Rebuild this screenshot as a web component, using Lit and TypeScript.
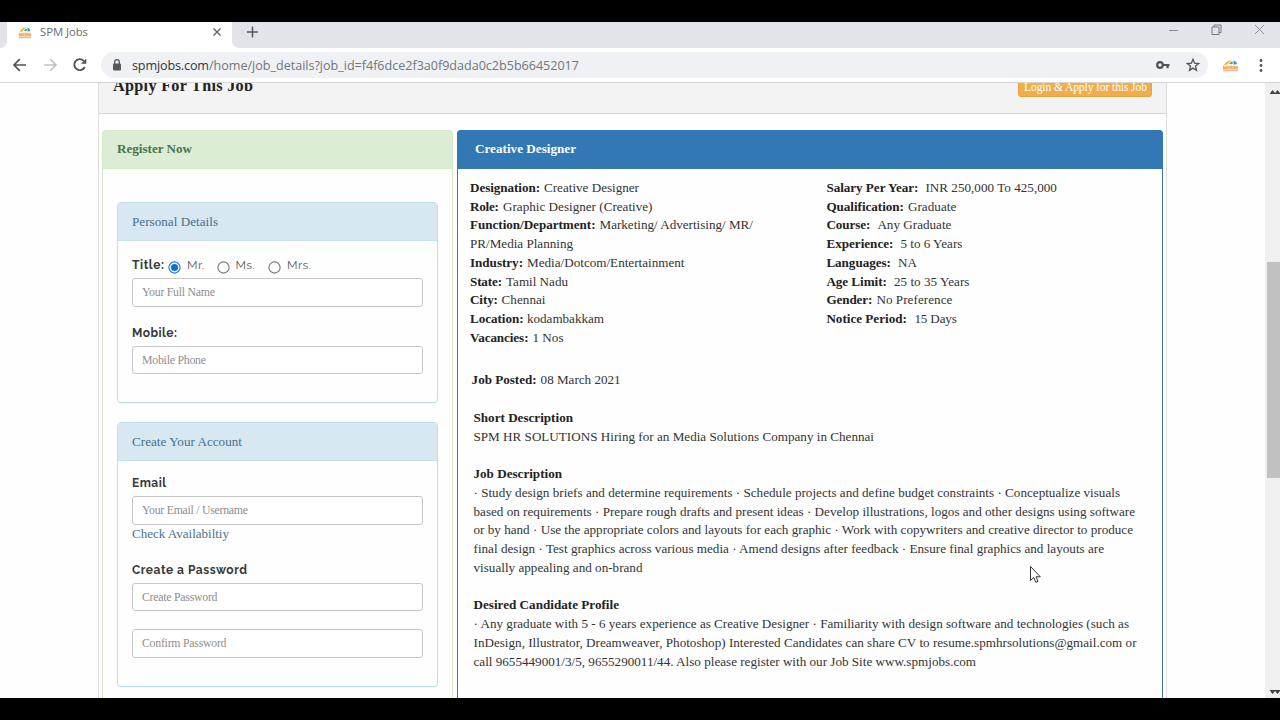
import { LitElement, html, css, svg, nothing } from "lit";
import { customElement, property } from "lit/decorators.js";

/** One line of text whose tracking is spread so that it fills a given width. */
@customElement("fit-text")
class FitText extends LitElement {
  @property({ type: Number }) w = 0;
  @property() text = "";
  static styles = css`
    :host { display: inline-block; white-space: pre; flex: none; }
  `;
  render() {
    return html`<span>${this.text}</span>`;
  }
  updated() {
    const span = this.renderRoot.querySelector("span") as HTMLElement;
    span.style.letterSpacing = "0px";
    const natural = span.getBoundingClientRect().width;
    const spacing = (this.w - natural) / Math.max(1, this.text.length - 1);
    span.style.letterSpacing = spacing.toFixed(4) + "px";
    this.style.width = this.w + "px";
  }
}

const fit = (text: string, w: number) => html`<fit-text .text=${text} .w=${w}></fit-text>`;

type Row = [string, number, number, string, number];

const LEFT: Row[] = [
  ["Designation:", 70, 4, "Creative Designer", 95],
  ["Role:", 29, 4, "Graphic Designer (Creative)", 149.5],
  ["Function/Department:", 125.5, 4, "Marketing/ Advertising/ MR/", 153.5],
  ["", 0, 0, "PR/Media Planning", 103],
  ["Industry:", 53, 4, "Media/Dotcom/Entertainment", 157.5],
  ["State:", 32, 4, "Tamil Nadu", 62],
  ["City:", 28, 3.5, "Chennai", 44],
  ["Location:", 53.5, 3.5, "kodambakkam", 77],
  ["Vacancies:", 58.5, 4, "1 Nos", 31],
];

const RIGHT: Row[] = [
  ["Salary Per Year:", 92, 7, "INR 250,000 To 425,000", 131.5],
  ["Qualification:", 77.5, 4, "Graduate", 48.5],
  ["Course:", 44, 7, "Any Graduate", 74],
  ["Experience:", 67, 7, "5 to 6 Years", 62],
  ["Languages:", 64.5, 7, "NA", 19],
  ["Age Limit:", 60.5, 7, "25 to 35 Years", 75.5],
  ["Gender:", 46, 4, "No Preference", 76],
  ["Notice Period:", 80.5, 7.5, "15 Days", 42.5],
];

const SECTIONS: { title: [string, number]; lines: [string, number][] }[] = [
  {
    title: ["Short Description", 99.5],
    lines: [["SPM HR SOLUTIONS Hiring for an Media Solutions Company in Chennai", 400.5]],
  },
  {
    title: ["Job Description", 88.5],
    lines: [
      ["· Study design briefs and determine requirements · Schedule projects and define budget constraints · Conceptualize visuals", 646.5],
      ["based on requirements · Prepare rough drafts and present ideas · Develop illustrations, logos and other designs using software", 661.5],
      ["or by hand · Use the appropriate colors and layouts for each graphic · Work with copywriters and creative director to produce", 659.5],
      ["final design · Test graphics across various media · Amend designs after feedback · Ensure final graphics and layouts are", 630.5],
      ["visually appealing and on-brand", 169],
    ],
  },
  {
    title: ["Desired Candidate Profile", 145.5],
    lines: [
      ["· Any graduate with 5 - 6 years experience as Creative Designer · Familiarity with design software and technologies (such as", 655.5],
      ["InDesign, Illustrator, Dreamweaver, Photoshop) Interested Candidates can share CV to resume.spmhrsolutions@gmail.com or", 663],
      ["call 9655449001/3/5, 9655290011/44. Also please register with our Job Site www.spmjobs.com", 502.5],
    ],
  },
];

const logo = (w: number) => html`<svg class="logo" width=${w} height="13" viewBox="0 0 17 13" preserveAspectRatio="none">
  <path d="M2 6C4 2.2 7 .8 10 1.6 8 2.4 6.6 3.8 5.6 5.4Z" fill="#f2b53c" />
  <path d="M7 4.6C9 6 10.500 5.400 11.600 3.600L9.400 2.400Z" fill="#4fae8e" />
  <path d="M11 1.600C13.400 2 14.800 3.400 15 5.200L11.400 5.400C12 4 12 3 11 1.600Z" fill="#2d9cc8" />
  <rect x="1" y="6.800" width="15" height="3.600" fill="#f3a95b" />
  <path d="M2 7.600H4.400M6 7.600V9.800M8 7.400V9.800M11 9.600V7.400M13 7.800H15.400" stroke="#fff3df" stroke-width=".7" />
  <rect x="1" y="11.200" width="15" height="1" fill="#e9a48a" />
</svg>`;

@customElement("app-root")
class AppRoot extends LitElement {
  static styles = css`
    :host { display: flex; flex-direction: column; box-sizing: border-box; width: 1280px; height: 720px; padding: 22px 0; background: #000; overflow: hidden; position: relative; font-family: "Liberation Serif", "Times New Roman", serif; color: #333; }
    * { box-sizing: border-box; }
    svg { display: block; flex: none; }
    .strip { height: 26px; flex: none; display: flex; background: #e2e4e9; font-family: "Open Sans", sans-serif; }
    .prev { width: 7px; background: #fff; }
    .prev i { display: block; height: 26px; background: #e2e4e9; border-bottom-right-radius: 7px; }
    .tab { width: 225px; background: #fff; display: flex; align-items: center; padding: 0 10px 6px 11px; color: #6a6d71; font-size: 11.4px; }
    .tab .name { margin: -2px 0 0 8px; flex: 1; }
    .rest { flex: 1; background: #fff; display: flex; }
    .rest .fill { flex: 1; background: #e2e4e9; border-bottom-left-radius: 7px; display: flex; padding: 4px 15px 0 14px; }
    .wins { margin-left: auto; margin-top: -2px; display: flex; gap: 32px; }
    .bar { height: 35px; flex: none; background: #fff; border-bottom: 1px solid #d4d5d7; display: flex; align-items: center; padding: 0 10px 0 10px; font-family: "Open Sans", sans-serif; }
    .nav { display: flex; gap: 10px; width: 91px; }
    .omni { width: 1107px; height: 26px; border-radius: 13px; background: #eff1f5; display: flex; align-items: center; padding: 0 7px 0 8px; font-size: 12.6px; line-height: 26px; color: #73767b; }
    .omni fit-text { margin-top: 1px; }
    .omni .host { color: #323437; margin-left: 7px; }
    .omni .key { margin-left: auto; margin-right: 14px; }
    .ext { margin-left: 14px; margin-right: 14px; }
    .view { flex: 1; min-height: 0; overflow: hidden; background: #fefefe; display: flex; }
    .page { width: 1265px; padding-left: 98px; }
    .outer { width: 1069px; height: 700px; border: solid #dedede; border-width: 0 1px; background: #fefefe; }
    .head { height: 31px; background: #f3f3f3; border-bottom: 1px solid #d8d8d8; display: flex; justify-content: space-between; padding: 0 14px; }
    .head h1 { margin: -8px 0 0; font-size: 16.2px; line-height: 22px; font-weight: bold; color: #222; }
    .btn { height: 22px; margin-top: -8px; width: 134px; background: #f0ad4e; border: 1px solid #eea236; border-radius: 3px; color: #fff; font-size: 11.6px; line-height: 23px; padding-left: 5px; overflow: hidden; }
    .cols { display: flex; gap: 4px; padding: 16px 0 0 3px; }
    .reg { width: 351px; height: 700px; border: 1px solid #d9e6cd; border-radius: 4px; }
    .reg > .title { height: 39px; margin: -1px -1px 0; background: #dcedd5; border-radius: 4px 4px 0 0; border: 1px solid #d6e9c6; color: #477548; font-weight: bold; font-size: 13.1px; line-height: 36px; padding-left: 14px; }
    .box { margin: 33px 0 0 14px; width: 321px; height: 201px; border: 1px solid #bfdfe8; border-radius: 4px; box-shadow: 0 1px 1px rgba(0, 0, 0, 0.05); padding: 0 14px; font-size: 13.1px; }
    .box.acct { margin-top: 19px; height: 265px; }
    .box .bt { margin: 0 -14px; padding-left: 14px; height: 38px; line-height: 37px; background: #d7e8f3; color: #476f88; border-bottom: 1px solid #c5e1ec; border-radius: 3px 3px 0 0; }
    .lab { font-family: "Raleway", "Lato", sans-serif; font-size: 12px; font-weight: bold; color: #383838; line-height: 18px; height: 18px; }
    .radios { display: flex; margin-top: 15px; height: 22px; }
    .radios .o { font-weight: normal; color: #5c5c5c; }
    .radios svg { margin: 5px 6px 0 3px; }
    .radios fit-text + svg { margin-left: 4px; }
    .inp { height: 28.5px; border: 1px solid #c6c6c6; border-radius: 3px; background: #fff; font-size: 11.8px; line-height: 27px; color: #8e8e8e; padding-left: 9px; }
    .link { color: #4a7390; line-height: 17px; height: 19px; }
    .job { width: 706px; height: 700px; border: 1px solid #3f7699; border-radius: 4px; font-size: 13.125px; line-height: 18.76px; }
    .job .title { height: 39px; margin: -1px -1px 0; background: #3178b5; border-radius: 4px 4px 0 0; color: #fff; font-weight: bold; line-height: 38px; padding-left: 18px; }
    .facts { display: flex; padding: 9.8px 0 0 12px; height: 180px; }
    .facts > div { width: 356.4px; flex: none; }
    .facts > div + div { width: 330px; }
    .row { display: flex; height: 18.76px; }
    .posted { margin-top: 22px; padding-left: 13.6px; }
    b, .st { color: #222; font-weight: bold; }
    .sec { padding-left: 15.5px; margin-top: 18.76px; }
    .posted + .sec { margin-top: 19.1px; }
    .scroll { width: 15px; background: #f0f0f0; display: flex; flex-direction: column; justify-content: space-between; padding: 7px 0 4px 2px; }
    .thumb { height: 216px; width: 13px; background: #c1c1c1; margin-top: -45px; }
    .cursor { position: absolute; left: 1029px; top: 565px; }
  `;

  radio(on: boolean) {
    return html`<svg width="13" height="13" viewBox="0 0 13 13">
      <circle cx="6.5" cy="6.5" r="5.6" fill="#fff" stroke=${on ? "#1a73e8" : "#777"} stroke-width="1.1" />
      ${on ? svg`<circle cx="6.5" cy="6.5" r="3.6" fill="#0b6fe0" />` : nothing}
    </svg>`;
  }

  rows(list: Row[]) {
    return list.map(
      ([l, lw, gap, v, vw]) => html`<div class="row">
        ${l ? html`<b style="margin-right:${gap}px">${fit(l, lw)}</b>` : nothing}${fit(v, vw)}
      </div>`
    );
  }

  render() {
    return html`
      <div class="strip">
        <div class="prev"><i></i></div>
        <div class="tab">
          ${logo(14)}
          <span class="name">${fit("SPM Jobs", 48)}</span>
          <svg width="10" height="10" viewBox="0 0 10 10" stroke="#5f6368" stroke-width="1.4"><path d="M1.500 1.500 8.500 8.500M8.500 1.500 1.500 8.500" /></svg>
        </div>
        <div class="rest"><div class="fill">
          <svg width="12" height="12" viewBox="0 0 12 12" stroke="#55585d" stroke-width="1.500"><path d="M6.500 .5V11.500M1 6H12" /></svg>
          <div class="wins">
            <svg width="11" height="11" viewBox="0 0 11 11" stroke="#8b8d91"><path d="M1 6.500H10" /></svg>
            <svg width="11" height="11" viewBox="0 0 11 11" fill="none" stroke="#77797d"><path d="M1 3H8V10.500H1ZM3 3V1H10V8.500H8" /></svg>
            <svg width="11" height="11" viewBox="0 0 11 11" stroke="#8b8d91"><path d="M1 1 10 10M10 1 1 10" /></svg>
          </div>
        </div></div>
      </div>
      <div class="bar">
        <div class="nav">
          <svg width="20" height="20" viewBox="0 0 20 20" fill="none" stroke="#505357" stroke-width="1.700"><path d="M16 10H4.300M9.800 4.200 4 10 9.800 15.800" /></svg>
          <svg width="20" height="20" viewBox="0 0 20 20" fill="none" stroke="#bcbec1" stroke-width="1.600"><path d="M4 10H15.700M10.200 4.200 16 10 10.200 15.800" /></svg>
          <svg width="20" height="20" viewBox="0 0 20 20" fill="none" stroke="#505357" stroke-width="1.800"><path d="M14.800 12A5.500 5.500 0 1 1 13.900 6" /><path d="M16.300 3.400V8.800H10.900Z" fill="#505357" stroke="none" /></svg>
        </div>
        <div class="omni">
          <svg width="16" height="16" viewBox="0 0 16 16"><rect x="4" y="6.500" width="8" height="7" rx="1" fill="#55585c" /><path d="M5.700 7V5A2.300 2.300 0 0 1 10.300 5V7" fill="none" stroke="#55585c" stroke-width="1.300" /></svg>
          <span class="host">${fit("spmjobs.com", 77)}</span>${fit("/home/job_details?job_id=f4f6dce2f3a0f9dada0c2b5b66452017", 370)}
          <svg class="key" width="16" height="16" viewBox="0 0 16 16"><circle cx="5" cy="8" r="2.800" fill="none" stroke="#505357" stroke-width="2.200" /><path d="M7.500 6.900H14.500V9.100H13.700V11.200H11.500V9.100H7.500Z" fill="#505357" /></svg>
          <svg width="16" height="16" viewBox="0 0 16 16" fill="none" stroke="#505357" stroke-width="1.300"><path d="M8 2.300 9.600 6.200 13.700 6.500 10.500 9.200 11.500 13.300 8 11.100 4.500 13.300 5.500 9.200 2.300 6.500 6.400 6.200Z" /></svg>
        </div>
        <div class="ext">${logo(17)}</div>
        <svg width="16" height="16" viewBox="0 0 16 16" fill="#505357"><circle cx="8" cy="3.500" r="1.400" /><circle cx="8" cy="8.500" r="1.400" /><circle cx="8" cy="13.500" r="1.400" /></svg>
      </div>
      <div class="view">
        <div class="page"><div class="outer">
          <div class="head">
            <h1>${fit("Apply For This Job", 140)}</h1>
            <div class="btn">${fit("Login & Apply for this Job", 123)}</div>
          </div>
          <div class="cols">
            <div class="reg">
              <div class="title">${fit("Register Now", 75)}</div>
              <div class="box">
                <div class="bt">${fit("Personal Details", 86)}</div>
                <div class="radios lab">
                  ${fit("Title:", 32)}${this.radio(true)}
                  <span class="o">${fit("Mr.", 17)}</span><span style="width:9.5px"></span>${this.radio(false)}
                  <span class="o">${fit("Ms.", 19)}</span><span style="width:10.5px"></span>${this.radio(false)}
                  <span class="o">${fit("Mrs.", 24)}</span>
                </div>
                <div class="inp">${fit("Your Full Name", 73)}</div>
                <div class="lab" style="margin:17px 0 4px">${fit("Mobile:", 45)}</div>
                <div class="inp">${fit("Mobile Phone", 64)}</div>
              </div>
              <div class="box acct">
                <div class="bt">${fit("Create Your Account", 110)}</div>
                <div class="lab" style="margin:13px 0 4px">${fit("Email", 34)}</div>
                <div class="inp">${fit("Your Email / Username", 106)}</div>
                <div class="link">${fit("Check Availabiltiy", 97)}</div>
                <div class="lab" style="margin:17px 0 4px">${fit("Create a Password", 115)}</div>
                <div class="inp">${fit("Create Password", 75.5)}</div>
                <div class="inp" style="margin-top:18px">${fit("Confirm Password", 84.5)}</div>
              </div>
            </div>
            <div class="job">
              <div class="title">${fit("Creative Designer", 101)}</div>
              <div class="facts"><div>${this.rows(LEFT)}</div><div>${this.rows(RIGHT)}</div></div>
              <div class="posted">${this.rows([["Job Posted:", 65, 4, "08 March 2021", 80]])}</div>
              ${SECTIONS.map(
                (s) => html`<div class="sec">
                  <div class="row st">${fit(s.title[0], s.title[1])}</div>
                  ${s.lines.map(([t, w]) => html`<div class="row">${fit(t, w)}</div>`)}
                </div>`
              )}
            </div>
          </div>
        </div></div>
        <div class="scroll">
          <svg width="13" height="4" viewBox="0 0 13 4" fill="#444"><path d="M2.500 4 5.500 0 8 3 10.500 0 13 3V4Z" /></svg>
          <div class="thumb"></div>
          <svg width="13" height="4" viewBox="0 0 13 4" fill="#444"><path d="M2.500 0 5.500 4 8 1 10.500 4 13 1V0Z" /></svg>
        </div>
      </div>
      <svg class="cursor" width="13" height="19" viewBox="0 0 13 19"><path d="M1.500 1.500V15.600L4.700 12.600 6.800 17.300 9 16.300 7 11.800H11.300Z" fill="#fff" stroke="#333" stroke-width="1" /></svg>
    `;
  }
}
